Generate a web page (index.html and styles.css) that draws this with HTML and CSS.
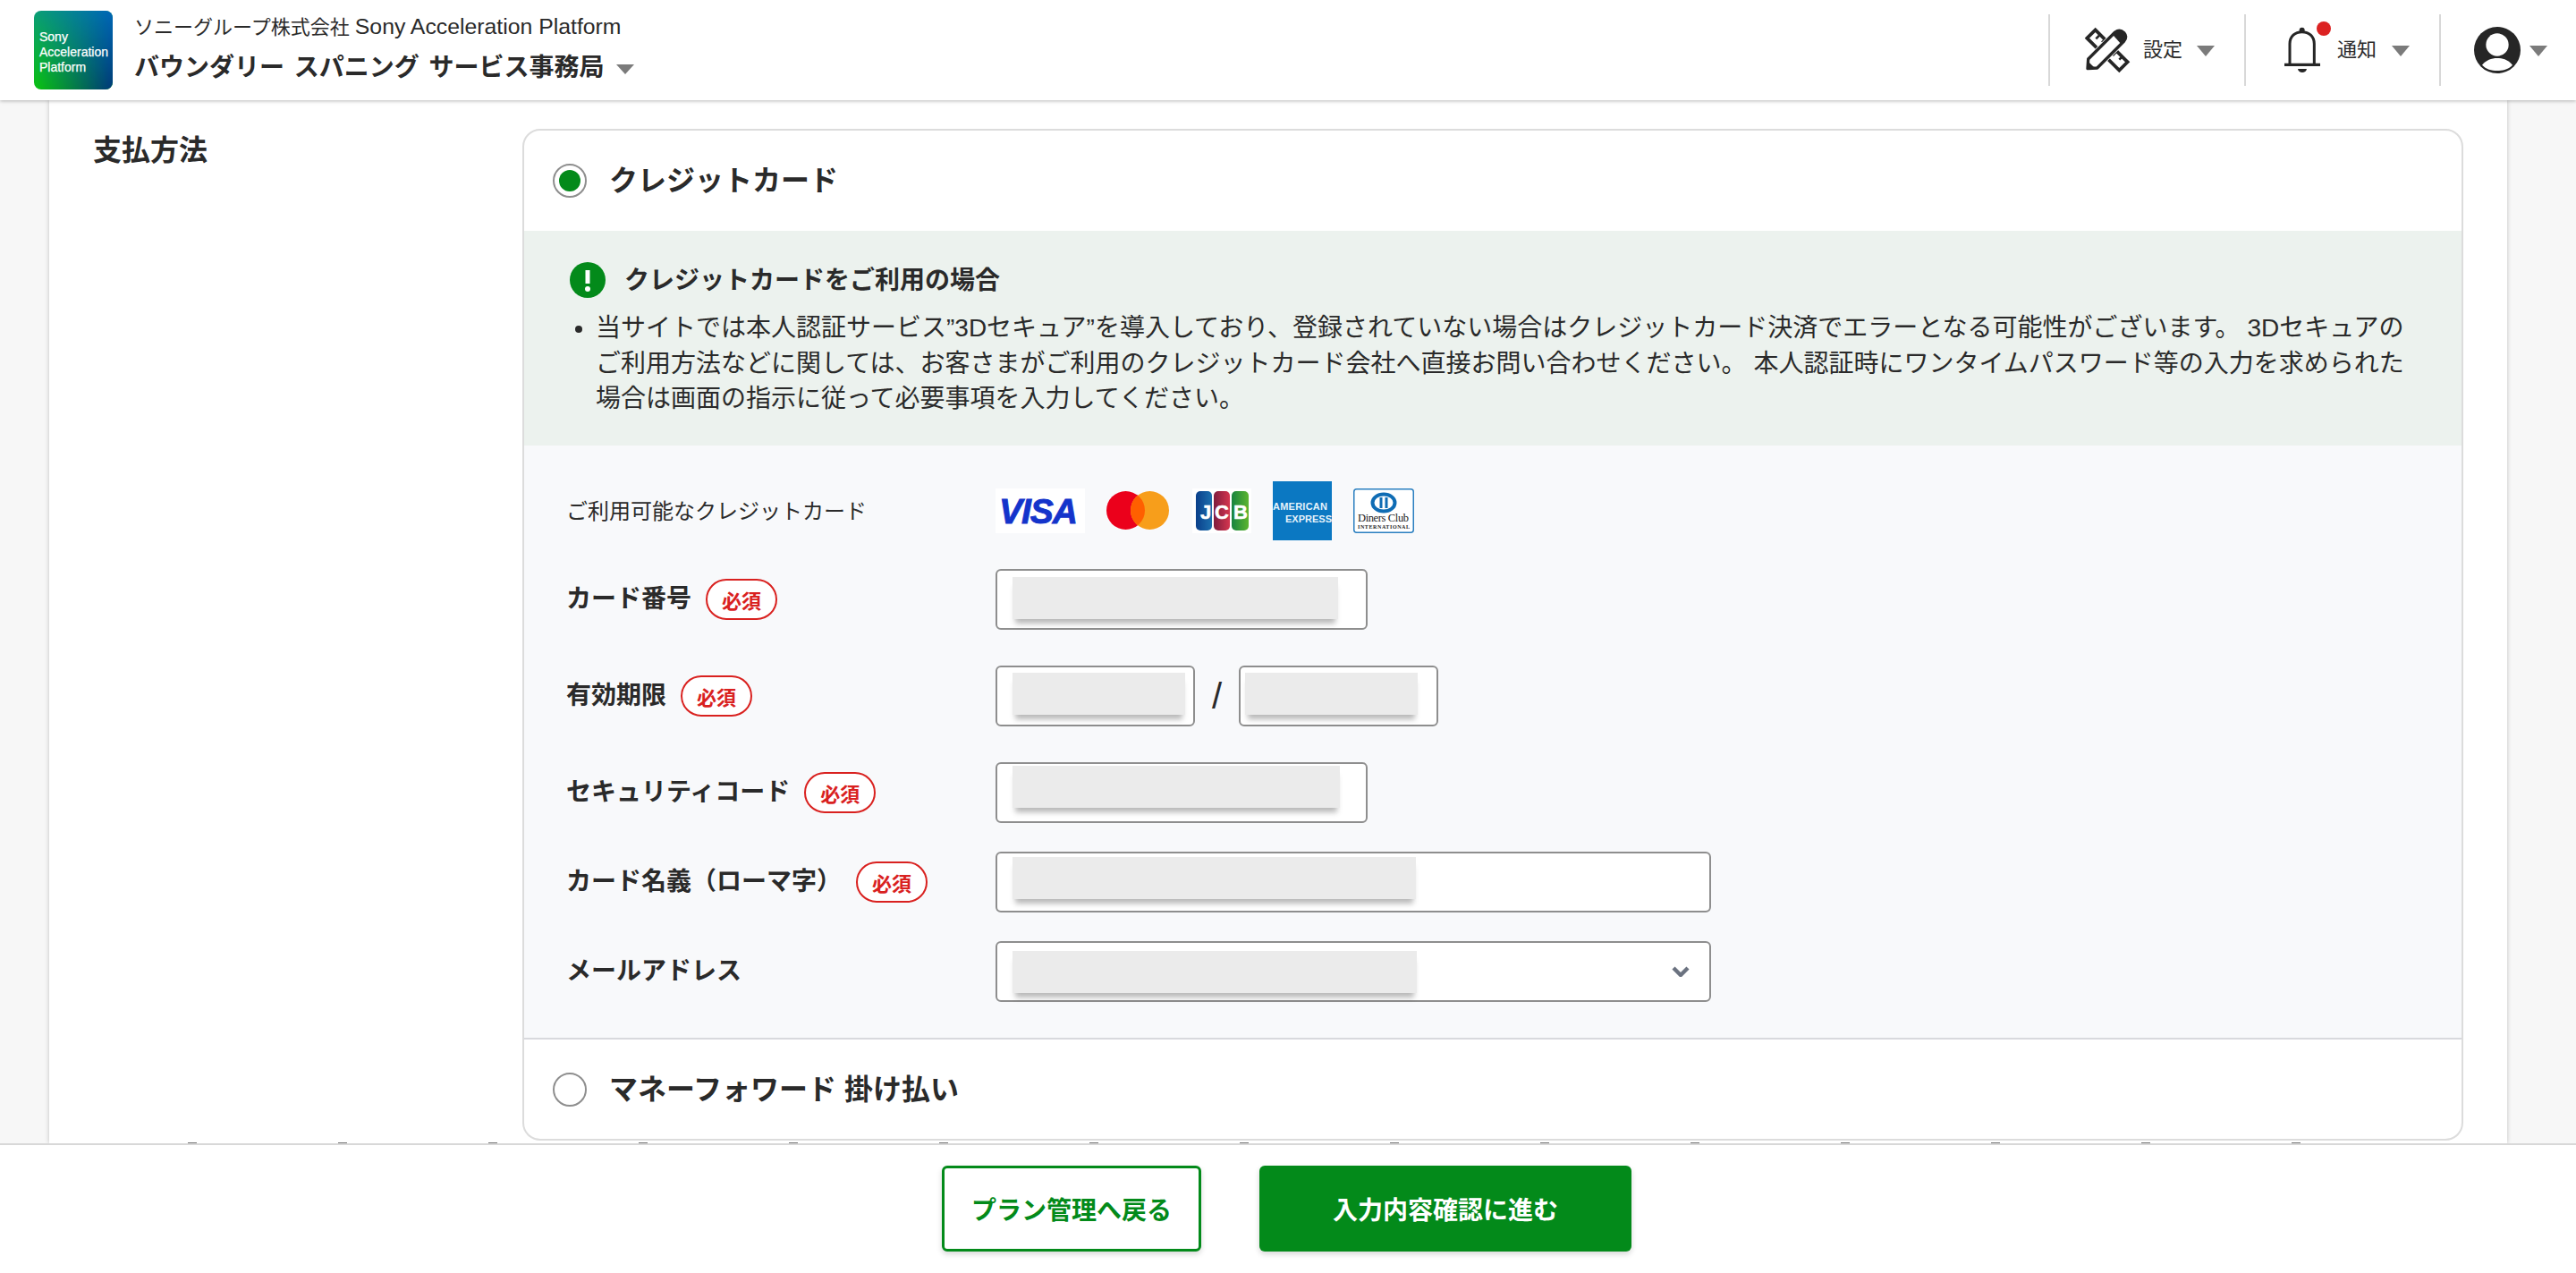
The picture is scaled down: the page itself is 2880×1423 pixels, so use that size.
FILE: index.html
```html
<!DOCTYPE html>
<html lang="ja">
<head>
<meta charset="utf-8">
<title>支払方法</title>
<link rel="stylesheet" href="styles.css">
</head>
<body>
<header class="topbar">
  <div class="logo"><span>Sony</span><span>Acceleration</span><span>Platform</span></div>
  <div class="brand">
    <div class="brand-sub">ソニーグループ株式会社 <span class="brand-latin">Sony Acceleration Platform</span></div>
    <div class="brand-main">バウンダリー スパニング サービス事務局<i class="caret caret-brand"></i></div>
  </div>
  <nav class="topnav">
    <div class="nav-item nav-settings">
      <svg class="ico-tools" viewBox="0 3 228 210" aria-hidden="true">
        <path d="M40 68 68 40 176 148 148 176Z" fill="#fff" stroke="#262626" stroke-width="11" stroke-linejoin="miter"/>
        <path d="M84 56 70 70M100 72 90 82M140 112 126 126M158 130 148 140" fill="none" stroke="#262626" stroke-width="8"/>
        <path d="M44 168 46 138 134 50 162 78 74 166Z" fill="#fff" stroke="#fff" stroke-width="18"/>
        <path d="M42 170 44 138 134 48Q150 36 164 50 Q176 64 164 78L74 168Z" fill="#fff" stroke="#262626" stroke-width="10" stroke-linejoin="round"/>
        <path d="M126 56 136 46Q150 36 164 50 Q176 64 164 78L154 88Z" fill="#262626"/>
        <path d="M42 170 44 146 66 168Z" fill="#262626"/>
      </svg>
      <span class="nav-label">設定</span><i class="caret"></i>
    </div>
    <div class="nav-item nav-notice">
      <svg class="ico-bell" viewBox="0 3 210 240" aria-hidden="true">
        <path d="M60 168V102C60 76 78 62 101 62S142 76 142 102V168" fill="none" stroke="#262626" stroke-width="9"/>
        <circle cx="101" cy="56" r="9" fill="#262626"/>
        <path d="M42 172H162" stroke="#262626" stroke-width="10"/>
        <path d="M87 186H117C115 202 89 202 87 186Z" fill="#262626"/>
        <circle cx="174" cy="51" r="24" fill="#dc2222"/>
      </svg>
      <span class="nav-label">通知</span><i class="caret caret-notice"></i>
    </div>
    <div class="nav-item nav-user">
      <svg class="ico-user" viewBox="0 0 156 156" aria-hidden="true">
        <circle cx="78" cy="78" r="78" fill="#262626"/>
        <circle cx="78" cy="60" r="38" fill="#fff"/>
        <path d="M27 128C40 112 58 105 78 105S116 112 129 128C116 142 98 147 78 147S40 142 27 128Z" fill="#fff"/>
      </svg>
      <i class="caret caret-user"></i>
    </div>
  </nav>
</header>

<main class="stage">
  <section class="sheet">
    <h2 class="sheet-label">支払方法</h2>
    <div class="sheet-body">
      <div class="pay-panel">
        <div class="pay-head">
          <span class="radio radio-on"></span>
          <span class="pay-title">クレジットカード</span>
        </div>
        <div class="notice">
          <div class="notice-head">
            <svg class="ico-alert" viewBox="0 0 40 40" aria-hidden="true">
              <circle cx="20" cy="20" r="20" fill="#038a1a"/>
              <path d="M20 9V24" stroke="#fff" stroke-width="5"/>
              <circle cx="20" cy="30" r="3" fill="#fff"/>
            </svg>
            <span class="notice-title">クレジットカードをご利用の場合</span>
          </div>
          <ul class="notice-list">
            <li>当サイトでは本人認証サービス”3Dセキュア”を導入しており、登録されていない場合はクレジットカード決済でエラーとなる可能性がございます。 3Dセキュアのご利用方法などに関しては、お客さまがご利用のクレジットカード会社へ直接お問い合わせください。 本人認証時にワンタイムパスワード等の入力を求められた場合は画面の指示に従って必要事項を入力してください。</li>
          </ul>
        </div>
        <div class="card-form">
          <div class="row row-brands">
            <div class="row-label"><span class="plain-label">ご利用可能なクレジットカード</span></div>
            <div class="brands">
              <svg class="b-visa" viewBox="0 0 100 50" aria-hidden="true">
                <rect width="100" height="50" fill="#fff"/>
                <text x="4" y="39" class="t-visa" textLength="88">VISA</text>
              </svg>
              <svg class="b-mc" viewBox="0 0 72 43" aria-hidden="true">
                <defs><clipPath id="mcclip"><circle cx="48.5" cy="21.5" r="21.5"/></clipPath></defs>
                <circle cx="21.5" cy="21.5" r="21.5" fill="#eb001b"/>
                <circle cx="48.5" cy="21.5" r="21.5" fill="#f79e1b"/>
                <circle cx="21.5" cy="21.5" r="21.5" fill="#ff5f00" clip-path="url(#mcclip)"/>
              </svg>
              <svg class="b-jcb" viewBox="0 0 66 50" aria-hidden="true">
                <defs>
                  <linearGradient id="jb" x1="0" x2="1" y1="0" y2="0"><stop offset="0" stop-color="#0a3f8a"/><stop offset="1" stop-color="#1c6fae"/></linearGradient>
                  <linearGradient id="jr" x1="0" x2="1" y1="0" y2="0"><stop offset="0" stop-color="#7f1d3e"/><stop offset="1" stop-color="#d5354f"/></linearGradient>
                  <linearGradient id="jg" x1="0" x2="1" y1="0" y2="0"><stop offset="0" stop-color="#17843f"/><stop offset="1" stop-color="#5db531"/></linearGradient>
                </defs>
                <rect width="66" height="50" fill="#fff"/>
                <rect x="4" y="3" width="18" height="44" rx="5" fill="url(#jb)"/>
                <rect x="24" y="3" width="18" height="44" rx="5" fill="url(#jr)"/>
                <rect x="44" y="3" width="19" height="44" rx="5" fill="url(#jg)"/>
                <text x="15" y="34" text-anchor="middle" class="t-jcb">J</text>
                <text x="33" y="34" text-anchor="middle" class="t-jcb">C</text>
                <text x="54" y="34" text-anchor="middle" class="t-jcb">B</text>
              </svg>
              <svg class="b-amex" viewBox="0 0 66 66" aria-hidden="true">
                <rect width="66" height="66" fill="#0b78c2"/>
                <text x="0" y="32" class="t-amex" textLength="61">AMERICAN</text>
                <text x="14" y="46" class="t-amex" textLength="52">EXPRESS</text>
              </svg>
              <svg class="b-diners" viewBox="0 0 68 50" aria-hidden="true">
                <rect x=".75" y=".75" width="66.5" height="48.5" rx="3" fill="#fff" stroke="#2a7fc0" stroke-width="1.5"/>
                <ellipse cx="34" cy="16" rx="12.5" ry="9.5" fill="#fff" stroke="#0f6cb4" stroke-width="4"/>
                <rect x="29.5" y="10" width="3" height="12" fill="#0f6cb4"/>
                <rect x="35.5" y="10" width="3" height="12" fill="#0f6cb4"/>
                <text x="5" y="37" class="t-diners" textLength="57">Diners Club</text>
                <text x="5" y="45" class="t-intl" textLength="58">INTERNATIONAL</text>
              </svg>
            </div>
          </div>

          <div class="row">
            <div class="row-label"><span class="field-label">カード番号</span><span class="req">必須</span></div>
            <div class="input input-md"><span class="mask mask-number"></span></div>
          </div>

          <div class="row row-spaced">
            <div class="row-label"><span class="field-label">有効期限</span><span class="req">必須</span></div>
            <div class="input input-sm"><span class="mask mask-month"></span></div>
            <span class="slash">/</span>
            <div class="input input-sm input-year"><span class="mask mask-year"></span></div>
          </div>

          <div class="row row-spaced">
            <div class="row-label"><span class="field-label">セキュリティコード</span><span class="req">必須</span></div>
            <div class="input input-md"><span class="mask mask-code"></span></div>
          </div>

          <div class="row">
            <div class="row-label"><span class="field-label">カード名義（ローマ字）</span><span class="req">必須</span></div>
            <div class="input input-lg"><span class="mask mask-name"></span></div>
          </div>

          <div class="row">
            <div class="row-label"><span class="field-label">メールアドレス</span></div>
            <div class="input input-lg input-select">
              <span class="mask mask-mail"></span>
              <svg class="chev" viewBox="0 0 20 12" aria-hidden="true"><path d="M2 2 10 10 18 2" fill="none" stroke="#6b7280" stroke-width="4.4"/></svg>
            </div>
          </div>
        </div>
        <div class="pay-foot">
          <span class="radio"></span>
          <span class="pay-title pay-title-foot">マネーフォワード 掛け払い</span>
        </div>
      </div>
      <div class="peek"></div>
    </div>
  </section>
</main>

<footer class="actionbar">
  <a class="btn btn-ghost">プラン管理へ戻る</a>
  <a class="btn btn-solid">入力内容確認に進む</a>
</footer>
</body>
</html>
```
FILE: styles.css
```css
* { box-sizing: border-box; }
html, body { margin: 0; height: 100%; }
body {
  display: flex;
  flex-direction: column;
  height: 100vh;
  overflow: hidden;
  background: #f7f7f7;
  color: #2a2a2a;
  font-family: "Liberation Sans", "Noto Sans CJK JP", sans-serif;
}

/* top bar */
.topbar {
  position: relative;
  z-index: 2;
  flex: 0 0 112px;
  display: flex;
  align-items: center;
  background: #fff;
  box-shadow: 0 1px 4px rgba(0, 0, 0, .28);
}
.logo {
  position: relative;
  flex: 0 0 88px;
  height: 88px;
  margin-left: 38px;
  padding: 21px 0 0 6px;
  border-radius: 8px;
  overflow: hidden;
  display: flex;
  flex-direction: column;
  color: #fff;
  font-size: 14px;
  line-height: 17px;
  font-weight: 400;
  -webkit-text-stroke: .25px #fff;
  background: linear-gradient(to bottom, #0a9c78, #0abf12);
}
.logo::before {
  content: "";
  position: absolute;
  inset: 0;
  background: linear-gradient(to bottom, #0068b4, #003e75);
  -webkit-mask-image: linear-gradient(to right, transparent 5%, #000 95%);
  mask-image: linear-gradient(to right, transparent 5%, #000 95%);
}
.logo span { position: relative; }
.brand { margin-left: 24px; }
.brand-sub { font-size: 22px; line-height: 32px; margin-top: -2px; }
.brand-latin { font-size: 24.8px; }
.brand-main {
  display: flex;
  align-items: center;
  font-size: 28px;
  line-height: 40px;
  font-weight: 700;
  margin-top: 9px;
  word-spacing: 3px;
}
.caret {
  display: block;
  width: 0;
  height: 0;
  border-left: 10px solid transparent;
  border-right: 10px solid transparent;
  border-top: 12px solid #7b7b7b;
  margin-left: 16px;
  margin-top: 2px;
}
.caret-brand { border-top-width: 11px; margin-left: 13px; }
.caret-notice { margin-left: 17px; }
.caret-user { margin-left: 10px; }

.topnav { margin-left: auto; display: flex; align-self: stretch; }
.nav-item {
  display: flex;
  align-items: center;
  height: 80px;
  margin-top: 16px;
  border-left: 2px solid #d8d8d8;
}
.nav-settings { flex: 0 0 219px; padding-left: 28px; }
.nav-notice { flex: 0 0 218px; padding-left: 29px; }
.nav-user { flex: 0 0 153px; padding-left: 37px; }
.nav-label { font-size: 22px; line-height: 30px; }
.ico-tools { width: 76px; height: 70px; display: block; }
.ico-bell { width: 70px; height: 80px; display: block; margin-right: 3px; }
.ico-user { width: 52px; height: 52px; display: block; }

/* scrolled page */
.stage { flex: 1 1 auto; min-height: 0; overflow: hidden; }
.sheet {
  width: 2748px;
  height: 100%;
  margin-left: 55px;
  padding: 32px 49px 0;
  display: flex;
  background: #fff;
  box-shadow: 0 0 5px rgba(0, 0, 0, .22);
}
.sheet-label {
  flex: 0 0 480px;
  margin: 0;
  padding-top: 2px;
  font-size: 32px;
  line-height: 44px;
  font-weight: 700;
}
.sheet-body { flex: 1 1 auto; }
.pay-panel {
  width: 2170px;
  height: 1131px;
  border: 2px solid #dcdcdc;
  border-radius: 20px;
  overflow: hidden;
  background: #fff;
}
.peek {
  height: 1px;
  margin: 2px 0 0 -480px;
  width: 2620px;
  background: repeating-linear-gradient(90deg, transparent 0 106px, #777 106px 116px, transparent 116px 168px);
}
.pay-head, .pay-foot { display: flex; align-items: center; padding-left: 32px; }
.pay-head { height: 112px; }
.pay-foot { height: 111px; padding-top: 3px; border-top: 2px solid #d8d9dd; }
.pay-title { font-size: 32px; line-height: 44px; font-weight: 700; margin-left: 25px; }
.pay-title-foot { padding-top: 1px; }
.radio {
  flex: 0 0 38px;
  height: 38px;
  border: 2px solid #8e8e8e;
  border-radius: 50%;
  background: #fff;
  display: flex;
  align-items: center;
  justify-content: center;
}
.radio-on::after { content: ""; width: 24px; height: 24px; border-radius: 50%; background: #038a1a; }

/* notice */
.notice { background: #ecf2ee; padding: 35px 60px 32px 51px; }
.notice-head { display: flex; align-items: center; height: 40px; }
.ico-alert { width: 40px; height: 40px; display: block; }
.notice-title { margin-left: 21px; padding-top: 2px; font-size: 28px; font-weight: 700; line-height: 40px; }
.notice-list { margin: 14px 0 0; padding: 0 0 0 29px; font-size: 28px; line-height: 39.6px; }

/* form */
.card-form { background: #f8f9fb; padding: 40px 0 40px 47px; }
.row { display: flex; align-items: center; margin-top: 32px; }
.row-spaced { margin-top: 40px; }
.row-brands { margin-top: 0; }
.row-label { flex: 0 0 480px; display: flex; align-items: center; }
.plain-label { font-size: 24px; line-height: 34px; padding-top: 2px; }
.field-label { font-size: 28px; line-height: 40px; font-weight: 700; }
.req {
  flex: 0 0 80px;
  height: 46px;
  margin-left: 16px;
  border: 2px solid #d9211f;
  border-radius: 23px;
  color: #d9211f;
  background: #fff;
  font-size: 22px;
  font-weight: 700;
  display: flex;
  align-items: center;
  justify-content: center;
}
.brands { display: flex; align-items: center; gap: 24px; }
.brands svg { display: block; }
.b-visa { width: 100px; height: 50px; }
.b-mc { width: 72px; height: 43px; }
.b-jcb { width: 66px; height: 50px; }
.b-amex { width: 66px; height: 66px; }
.b-diners { width: 68px; height: 50px; }
.t-visa { font: italic 700 39px "Liberation Sans", sans-serif; fill: #1434cb; stroke: #1434cb; stroke-width: .9px; }
.t-jcb { font: 700 22px "Liberation Sans", sans-serif; fill: #fff; stroke: #fff; stroke-width: .5px; }
.t-amex { font: 700 11px "Liberation Sans", sans-serif; fill: #e4f2fb; }
.t-diners { font: 400 12.5px "Liberation Serif", serif; fill: #222; }
.t-intl { font: 700 6px "Liberation Serif", serif; fill: #222; }

.input {
  height: 68px;
  padding-left: 17px;
  border: 2px solid #8e8e8e;
  border-radius: 6px;
  background: #fff;
  display: flex;
  align-items: flex-start;
}
.input-md { width: 416px; }
.input-sm { width: 223px; }
.input-lg { width: 800px; }
.input-year { padding-left: 5px; }
.input-select { justify-content: space-between; padding-right: 22px; }
.slash { flex: 0 0 49px; text-align: center; font-size: 40px; line-height: 50px; font-weight: 300; }
.mask {
  display: block;
  height: 47px;
  background: #ebebeb;
  box-shadow: 0 8px 6px -3px rgba(0, 0, 0, .28);
}
.mask-number { width: 364px; margin-top: 7px; }
.mask-month { width: 193px; margin-top: 6px; }
.mask-year { width: 193px; margin-top: 6px; }
.mask-code { width: 366px; margin-top: 2px; }
.mask-name { width: 451px; margin-top: 4px; }
.mask-mail { width: 452px; margin-top: 9px; }
.chev { width: 20px; height: 12px; align-self: center; display: block; }

/* bottom actions */
.actionbar {
  position: relative;
  z-index: 2;
  flex: 0 0 145px;
  display: flex;
  justify-content: center;
  align-items: center;
  gap: 65px;
  padding: 0 3px 1px 0;
  border-top: 2px solid #d8d8d8;
  background: #fff;
}
.btn {
  height: 96px;
  border-radius: 6px;
  display: flex;
  align-items: center;
  justify-content: center;
  font-size: 28px;
  font-weight: 700;
  box-shadow: 0 3px 6px rgba(0, 0, 0, .16);
}
.btn-ghost { width: 290px; border: 3px solid #038a1a; background: #fff; color: #038a1a; }
.btn-solid { width: 416px; background: #038a1a; color: #fff; }
```
